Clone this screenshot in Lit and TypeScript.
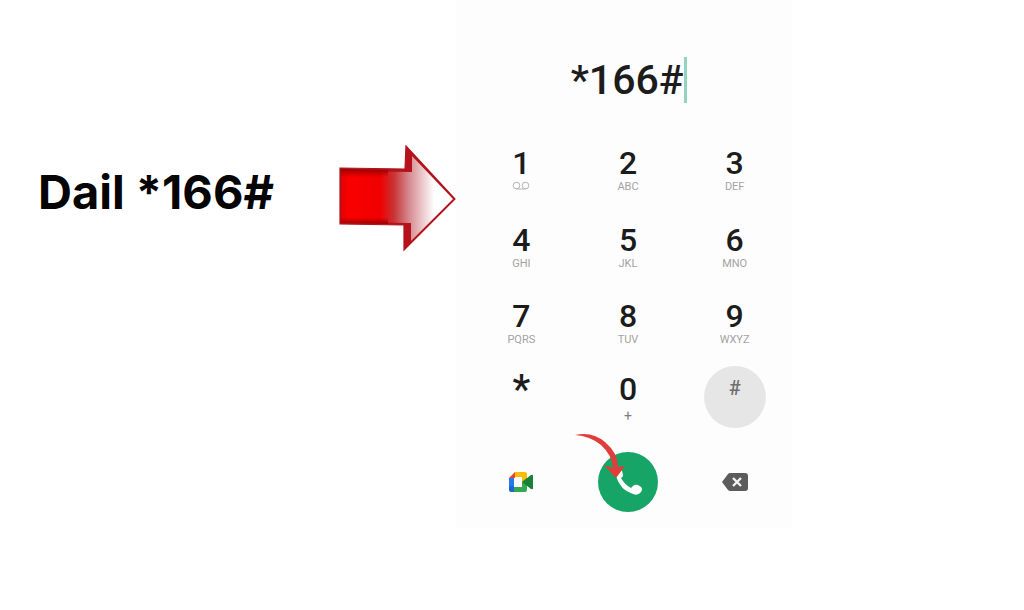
import { LitElement, html, css, svg } from "lit";
import { customElement } from "lit/decorators.js";

interface Key {
  main: string;
  sub: string;
  pressed?: boolean;
}

const KEYS: Key[] = [
  { main: "1", sub: "voicemail" },
  { main: "2", sub: "ABC" },
  { main: "3", sub: "DEF" },
  { main: "4", sub: "GHI" },
  { main: "5", sub: "JKL" },
  { main: "6", sub: "MNO" },
  { main: "7", sub: "PQRS" },
  { main: "8", sub: "TUV" },
  { main: "9", sub: "WXYZ" },
  { main: "*", sub: "" },
  { main: "0", sub: "+" },
  { main: "#", sub: "", pressed: true },
];

const voicemail = svg`<svg class="voicemail" viewBox="0 0 18 10" aria-hidden="true">
  <circle cx="4.5" cy="4.5" r="3.3" /><circle cx="13.5" cy="4.5" r="3.3" /><path d="M4.5 8H13.5" />
</svg>`;

@customElement("dial-pad")
export class DialPad extends LitElement {
  static styles = css`
    :host {
      display: block;
      box-sizing: border-box;
      padding: 54px 4px 16px 12px;
      background: #fdfdfd;
      color: #1c1c1c;
      font-family: Roboto, sans-serif;
    }
    button {
      padding: 0;
      border: 0;
      background: none;
      color: inherit;
      font: inherit;
    }
    .display {
      display: flex;
      justify-content: center;
      align-items: center;
      height: 52px;
      margin-bottom: 34px;
    }
    .number {
      width: 114px;
      padding: 0;
      border: 0;
      background: none;
      color: inherit;
      font: 500 41px/48px Roboto, sans-serif;
      text-align: right;
      outline: none;
    }
    .caret {
      width: 3px;
      height: 46px;
      background: #93d3bf;
    }
    .keys,
    .actions {
      display: grid;
      grid-template-columns: repeat(3, 1fr);
      justify-items: center;
    }
    .keys {
      grid-template-rows: 77px 76px 73px 80px;
    }
    .key {
      display: flex;
      flex-direction: column;
      align-items: center;
      width: 62px;
      height: 62px;
      padding-top: 5px;
      border-radius: 50%;
    }
    .main {
      font-size: 32px;
      font-weight: 500;
      line-height: 36px;
    }
    .sub {
      height: 12px;
      color: #a3a3a3;
      font-size: 11px;
      line-height: 12px;
    }
    .star .main {
      font-size: 40px;
      line-height: 38px;
    }
    .zero .sub {
      padding-top: 3px;
      color: #7d7d7d;
      font-size: 14px;
    }
    .pressed {
      background: #e6e6e6;
      color: #6f6f6f;
    }
    .pressed .main {
      font-size: 20px;
      line-height: 34px;
    }
    .voicemail {
      display: block;
      width: 18px;
      height: 10px;
      fill: none;
      stroke: #b4b4b4;
    }
    .actions {
      align-items: center;
      margin-top: 6px;
    }
    .action {
      display: block;
      position: relative;
    }
    .action svg {
      display: block;
    }
    .call {
      display: grid;
      place-items: center;
      width: 60px;
      height: 60px;
      border-radius: 50%;
      background: #17a567;
    }
    .action .pointer {
      position: absolute;
      left: -24px;
      top: -20px;
    }
  `;

  render() {
    return html`
      <div class="display">
        <input class="number" type="text" aria-label="Phone number" .value=${"*166#"} readonly />
        <span class="caret"></span>
      </div>
      <div class="keys">
        ${KEYS.map(
          (key) => html`<button
            class="key ${key.pressed ? "pressed" : ""} ${key.main === "*" ? "star" : ""} ${key.main === "0" ? "zero" : ""}"
            type="button"
          >
            <span class="main">${key.main}</span>
            <span class="sub">${key.sub === "voicemail" ? voicemail : key.sub}</span>
          </button>`
        )}
      </div>
      <div class="actions">
        <button class="action" type="button" aria-label="Video call">
          <svg width="24" height="20" viewBox="0 0 24 20">
            <path d="M0 6L6 0V6Z" fill="#ea4335" />
            <path d="M0 6H5V14H0Z" fill="#2878e8" />
            <path d="M0 14H5V20H2Q0 20 0 18Z" fill="#1967d2" />
            <path d="M6 0H16Q18 0 18 2V8L13 11V5H6Z" fill="#fbbc04" />
            <path d="M5 15H13V10L18 6V18Q18 20 16 20H5Z" fill="#34a853" />
            <path d="M13 10L22 3Q24 2 24 4V16Q24 18 22 17Z" fill="#188038" />
          </svg>
        </button>
        <button class="action call" type="button" aria-label="Call">
          <svg width="32" height="32" viewBox="0 0 32 32">
            <path
              d="M5 4Q8 2 10 5L11 9Q11 11 9 12Q13 19 19 22L21 20Q23 18 26 19L29 21Q31 23 29 26Q26 30 21 28Q8 24 4 10Q3 6 5 4Z"
              fill="#fff"
            />
          </svg>
          <svg class="pointer" width="54" height="48" viewBox="574 431 54 48" aria-hidden="true">
            <path
              d="M575 434Q592 430 605 441Q618 452 618 466L625 465L616 477L604 464L613 467Q612 454 601 444Q590 435 575 434Z"
              fill="#df3e3a"
            />
          </svg>
        </button>
        <button class="action" type="button" aria-label="Backspace">
          <svg width="26" height="18" viewBox="0 0 26 18">
            <path d="M8 0H23Q26 0 26 3V15Q26 18 23 18H8Q7 18 6 17L0 9L6 1Q7 0 8 0Z" fill="#5c5c5c" />
            <path d="M11 5L19 13M19 5L11 13" stroke="#f4f4f4" stroke-width="2.4" />
          </svg>
        </button>
      </div>
    `;
  }
}

@customElement("app-root")
export class AppRoot extends LitElement {
  static styles = css`
    :host {
      display: block;
      min-height: 100vh;
      background: #fff;
    }
    .layout {
      display: grid;
      grid-template-columns: 339fr 117fr 336fr 232fr;
      align-items: start;
    }
    .caption {
      margin: 164px 0 0 38px;
      color: #050505;
      font: 700 47px/56px Inter, sans-serif;
      white-space: nowrap;
    }
    .arrow {
      display: block;
      width: 100%;
      margin-top: 145px;
    }
  `;

  render() {
    return html`
      <main class="layout">
        <h1 class="caption">Dail *166#</h1>
        <svg class="arrow" viewBox="339 145 117 107" aria-hidden="true">
          <defs>
            <linearGradient id="body" gradientUnits="userSpaceOnUse" x1="340" y1="0" x2="455" y2="0">
              <stop offset="0" stop-color="#e00000" />
              <stop offset="0.07" stop-color="#fa0000" />
              <stop offset="0.35" stop-color="#f00000" />
              <stop offset="0.47" stop-color="#c83436" />
              <stop offset="0.6" stop-color="#d58a90" />
              <stop offset="0.82" stop-color="#fff" />
            </linearGradient>
            <linearGradient id="shade" x1="0" y1="0" x2="0" y2="1">
              <stop offset="0" stop-color="#a00000" />
              <stop offset="0.15" stop-color="#a00000" stop-opacity="0" />
              <stop offset="0.88" stop-color="#a00000" stop-opacity="0" />
              <stop offset="1" stop-color="#a00000" />
            </linearGradient>
          </defs>
          <path d="M340 168L405 169L406 146L455 199L404 250V225L340 224Z" fill="#b5121b" />
          <path d="M342 171L412 172V156L453 199L411 241V223L341 222Z" fill="url(#body)" />
          <path d="M340 169L388 170V224L340 223Z" fill="url(#shade)" />
          <path d="M340 168L405 169L406 146L455 199L404 250V225L340 224Z" fill="none" stroke="#b0131c" stroke-width="1.2" />
        </svg>
        <dial-pad></dial-pad>
      </main>
    `;
  }
}
